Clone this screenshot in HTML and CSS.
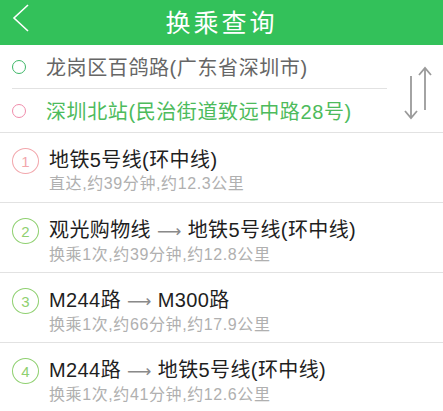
FILE: index.html
```html
<!DOCTYPE html>
<html lang="zh-CN">
<head>
  <meta charset="UTF-8" />
  <meta name="viewport" content="width=device-width, initial-scale=1" />
  <title>换乘查询</title>
  <link rel="stylesheet" href="styles.css">
</head>
<body>

<div class="header">
  <svg class="back" width="18" height="28" viewBox="0 0 18 28">
    <polyline points="16,1 2,14 16,27" fill="none" stroke="#fff" stroke-width="1.6" />
  </svg>
  <h1>换乘查询</h1>
</div>

<div class="search">
  <div class="places">
    <div class="place from">
      <span class="ring"></span>
      <span class="place-name">龙岗区百鸽路(广东省深圳市)</span>
    </div>
    <div class="place to">
      <span class="ring"></span>
      <span class="place-name">深圳北站(民治街道致远中路28号)</span>
    </div>
  </div>
  <svg class="swap" width="34" height="56" viewBox="0 0 34 56">
    <g fill="none" stroke="#9a9a9a" stroke-width="1.8">
      <line x1="11" y1="12" x2="11" y2="54" />
      <polyline points="5,47 11,54 17,47" />
      <line x1="25" y1="4" x2="25" y2="46" />
      <polyline points="19,11 25,4 31,11" />
    </g>
  </svg>
</div>

<ul class="routes">
  <li class="route">
    <span class="num first">1</span>
    <div class="info">
      <div class="route-title">地铁5号线(环中线)</div>
      <div class="route-meta">直达,约39分钟,约12.3公里</div>
    </div>
  </li>
  <li class="route">
    <span class="num">2</span>
    <div class="info">
      <div class="route-title">观光购物线 <span class="arrow">⟶</span> 地铁5号线(环中线)</div>
      <div class="route-meta">换乘1次,约39分钟,约12.8公里</div>
    </div>
  </li>
  <li class="route">
    <span class="num">3</span>
    <div class="info">
      <div class="route-title">M244路 <span class="arrow">⟶</span> M300路</div>
      <div class="route-meta">换乘1次,约66分钟,约17.9公里</div>
    </div>
  </li>
  <li class="route">
    <span class="num">4</span>
    <div class="info">
      <div class="route-title">M244路 <span class="arrow">⟶</span> 地铁5号线(环中线)</div>
      <div class="route-meta">换乘1次,约41分钟,约12.6公里</div>
    </div>
  </li>
</ul>

</body>
</html>
```

FILE: styles.css
```css
body {
  font-family: "Liberation Sans", "Noto Sans CJK SC", sans-serif;
  background: #fff;
  margin: 0;
  overflow: hidden;
}
.header {
  height: 45px;
  background: #33c15a;
  display: flex;
  align-items: center;
  justify-content: center;
  position: relative;
}
.header h1 {
  margin: 0 0 4px;
  color: #fff;
  font-size: 25px;
  font-weight: 400;
  letter-spacing: 3px;
}
.back {
  position: absolute;
  left: 12px;
  top: 4px;
}
.search {
  display: flex;
  align-items: center;
  height: 87px;
  border-bottom: 1px solid #e2e2e2;
}
.places {
  width: 375px;
  margin-left: 12px;
}
.place {
  display: flex;
  align-items: center;
  height: 43px;
  font-size: 20px;
  letter-spacing: 0.6px;
}
.place.from {
  border-bottom: 1px solid #e2e2e2;
  height: 42px;
}
.ring {
  flex-shrink: 0;
  box-sizing: border-box;
  width: 14px;
  height: 14px;
  border-radius: 50%;
  border: 1.5px solid #3db767;
  margin: 1px 20px 0 0;
}
.to .ring {
  border-color: #f08cab;
}
.from .place-name {
  color: #666;
}
.to .place-name {
  color: #4dbb5c;
}
.swap {
  margin-left: 13px;
  margin-top: 6px;
}
.routes {
  list-style: none;
  margin: 0;
  padding: 0;
}
.route {
  display: flex;
  align-items: flex-start;
  height: 69px;
  border-bottom: 1px solid #e2e2e2;
  padding-left: 12px;
}
.num {
  flex-shrink: 0;
  box-sizing: border-box;
  width: 27px;
  height: 26px;
  margin-top: 15px;
  border-radius: 50%;
  border: 1.5px solid #8fd070;
  color: #8fd070;
  font-size: 15px;
  display: flex;
  align-items: center;
  justify-content: center;
}
.num.first {
  border-color: #f2a7ac;
  color: #f2a7ac;
}
.info {
  margin-left: 10px;
  padding-top: 15px;
}
.route-title {
  font-size: 20px;
  line-height: 24px;
  color: #1e1e1e;
  letter-spacing: 0.4px;
}
.arrow {
  font-family: "DejaVu Sans", sans-serif;
  color: #8a8a8a;
  font-size: 17px;
}
.route-meta {
  margin-top: 3px;
  font-size: 16px;
  line-height: 18px;
  letter-spacing: 0.6px;
  color: #b0b0b0;
}
```
